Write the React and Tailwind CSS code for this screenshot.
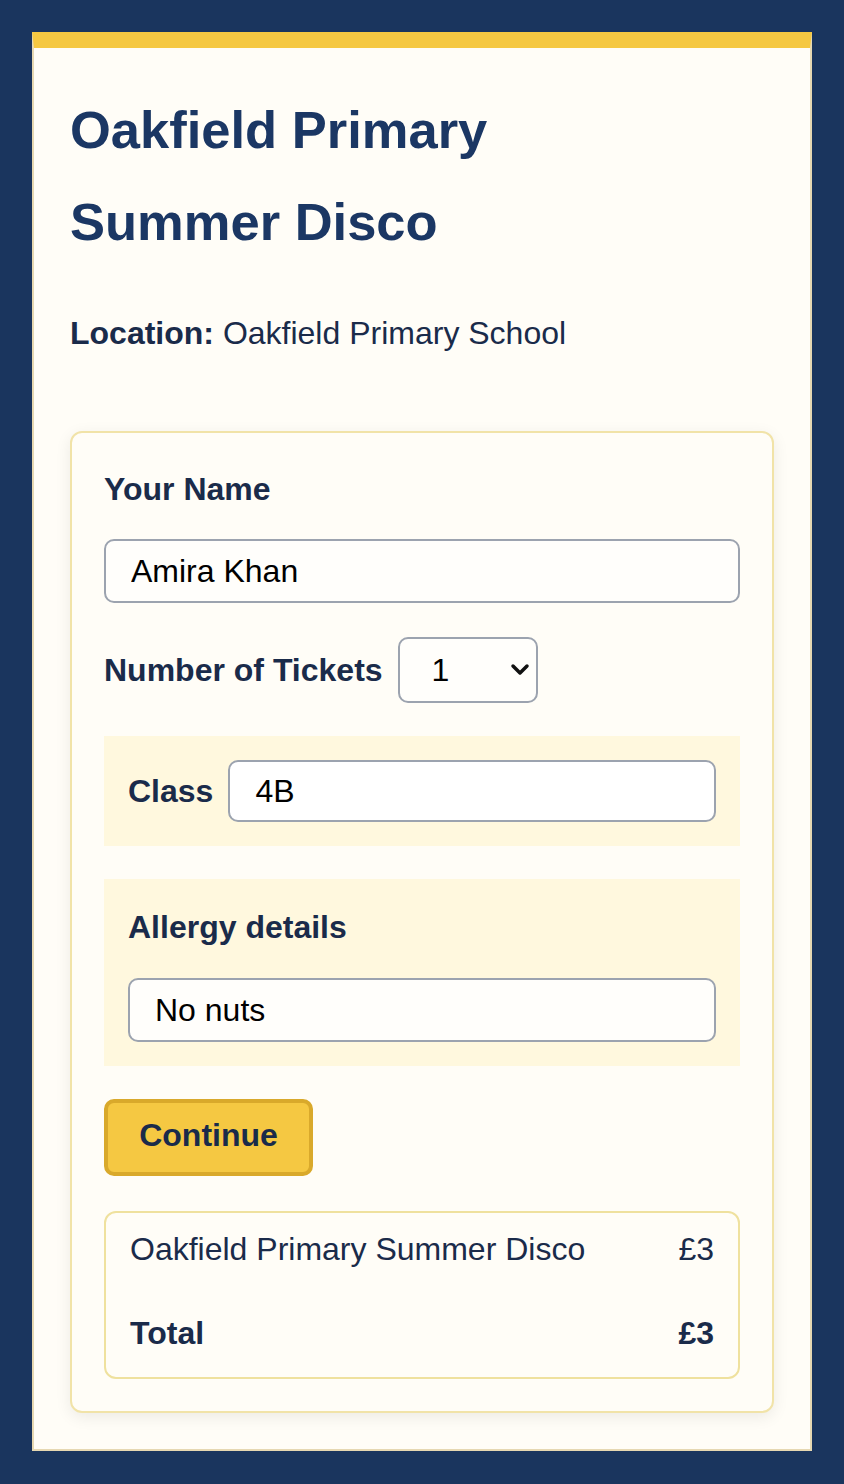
import { useState } from "react";

export default function App() {
  const [name, setName] = useState("Amira Khan");
  const [tickets, setTickets] = useState("1");
  const [klass, setKlass] = useState("4B");
  const [allergy, setAllergy] = useState("No nuts");

  const price = 3;
  const total = price * Number(tickets);

  return (
    <div
      className="min-h-screen bg-[#1a355e] p-8"
      style={{ fontFamily: '"Liberation Sans", Arial, sans-serif' }}
    >
      <div className="border-2 border-[#e6d8b2] border-t-[16px] border-t-[#f5c842] bg-[#fffdf7] p-9">
        <h1 className="m-0 text-[52.5px] leading-[92px] font-bold text-[#1b3764]">
          Oakfield Primary
          <br />
          Summer Disco
        </h1>

        <p className="mt-[41px] text-[32px] leading-[48px] text-[#1a2b4a]">
          <span className="font-bold">Location:</span> Oakfield Primary School
        </p>

        {/* booking form card */}
        <div className="mt-[74px] rounded-[12px] border-2 border-[#f1e3a8] bg-[#fffdf7] p-8 shadow-[0_4px_16px_rgba(0,0,0,0.08)]">
          <label className="block text-[32px] leading-[48px] font-bold text-[#1a2b4a]">
            Your Name
          </label>
          <input
            value={name}
            onChange={(e) => setName(e.target.value)}
            className="mt-[26px] block h-[64px] w-full rounded-[10px] border-2 border-[#9ca3af] bg-[#fffefb] px-[25px] text-[32px] text-black outline-none"
          />

          <div className="mt-[34px] flex items-center gap-[15px]">
            <label className="text-[32px] leading-[48px] font-bold text-[#1a2b4a]">
              Number of Tickets
            </label>
            <div className="relative">
              <select
                value={tickets}
                onChange={(e) => setTickets(e.target.value)}
                className="block h-[66px] w-[140px] appearance-none rounded-[10px] border-2 border-[#9ca3af] bg-[#fffefb] pl-[32px] text-[32px] text-black outline-none"
              >
                <option value="1">1</option>
                <option value="2">2</option>
                <option value="3">3</option>
                <option value="4">4</option>
              </select>
              <svg
                className="pointer-events-none absolute right-[8px] top-[26px]"
                width="20"
                height="14"
                viewBox="0 0 20 14"
                fill="none"
              >
                <path d="M3 3l7 7 7-7" stroke="#111" strokeWidth="3.5" strokeLinecap="round" strokeLinejoin="round" />
              </svg>
            </div>
          </div>

          <div className="mt-[33px] flex items-center gap-[15px] bg-[#fff8de] p-6">
            <label className="text-[32px] leading-[48px] font-bold text-[#1a2b4a]">Class</label>
            <input
              value={klass}
              onChange={(e) => setKlass(e.target.value)}
              className="block h-[62px] min-w-0 flex-1 rounded-[10px] border-2 border-[#9ca3af] bg-white px-[25px] text-[32px] text-black outline-none"
            />
          </div>

          <div className="mt-[33px] bg-[#fff8de] p-6">
            <label className="block text-[32px] leading-[48px] font-bold text-[#1a2b4a]">
              Allergy details
            </label>
            <input
              value={allergy}
              onChange={(e) => setAllergy(e.target.value)}
              className="mt-[27px] block h-[64px] w-full rounded-[10px] border-2 border-[#9ca3af] bg-[#fffefb] px-[25px] text-[32px] text-black outline-none"
            />
          </div>

          <button className="mt-[33px] block h-[77px] w-[209px] rounded-[10px] border-4 border-[#d9a92b] bg-[#f5c842] pb-[5px] text-center text-[32px] font-bold text-[#1a2b4a]">
            Continue
          </button>

          {/* order summary */}
          <div className="mt-[35px] rounded-[12px] border-2 border-[#efe19e] bg-[#fffdf7] px-6 pb-[8px]">
            <div className="flex items-center justify-between py-3 text-[32px] leading-[48px] text-[#1a2b4a]">
              <span>Oakfield Primary Summer Disco</span>
              <span>£{price}</span>
            </div>
            <div className="mt-3 flex items-center justify-between py-3 text-[32px] leading-[48px] font-bold text-[#1a2b4a]">
              <span>Total</span>
              <span>£{total}</span>
            </div>
          </div>
        </div>
      </div>
    </div>
  );
}
